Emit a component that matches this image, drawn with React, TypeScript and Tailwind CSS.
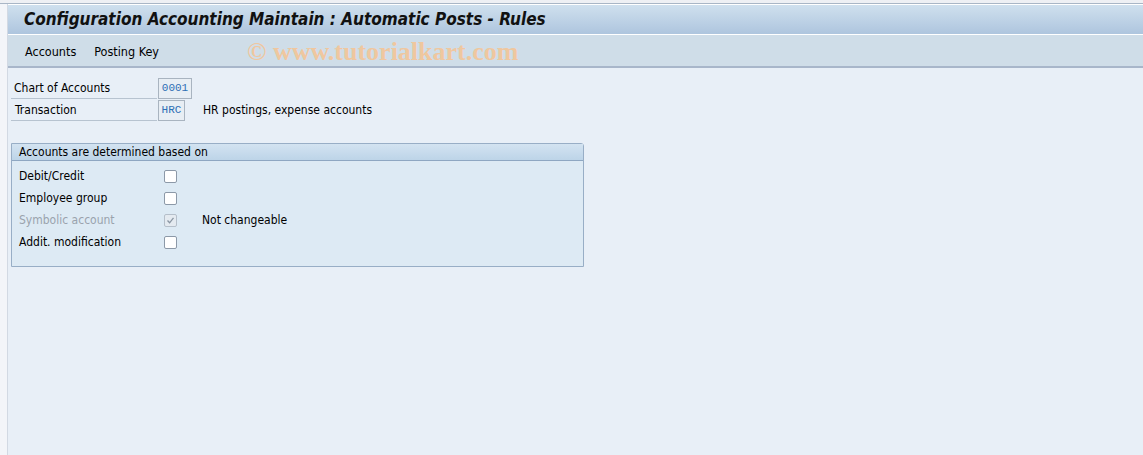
import React from "react";

const font = { fontFamily: '"DejaVu Sans Condensed", "DejaVu Sans", sans-serif' };

function Check({ checked, disabled }: { checked?: boolean; disabled?: boolean }) {
  return (
    <div
      className={`w-[13px] h-[13px] rounded-[2px] border ${disabled ? "border-[#b5bfca] bg-[#e4eaf0]" : "border-[#8c99a8] bg-white"} flex items-center justify-center`}
    >
      {checked && (
        <svg width="9" height="9" viewBox="0 0 9 9">
          <path d="M1.5 4.5 L3.6 6.8 L7.5 1.8" fill="none" stroke="#8a96a3" strokeWidth="1.3" />
        </svg>
      )}
    </div>
  );
}

export default function App() {
  const rows: { label: string; disabled?: boolean; checked?: boolean; note?: string }[] = [
    { label: "Debit/Credit" },
    { label: "Employee group" },
    { label: "Symbolic account", disabled: true, checked: true, note: "Not changeable" },
    { label: "Addit. modification" },
  ];
  return (
    <div className="w-[1143px] h-[455px] overflow-hidden bg-[#f3f5f9] flex flex-col text-[12px] text-black" style={font}>
      <div className="h-[4px] shrink-0 bg-[#eef0f4] border-b border-[#a9b6c6]" />
      <div className="flex-1 flex min-h-0">
        <div className="w-[7px] shrink-0 bg-[#f3f5f9]" />
        <div className="flex-1 flex flex-col border-l border-[#d2d9e3] min-w-0">
          <div className="h-[30px] shrink-0 bg-gradient-to-b from-[#cfe0ee] to-[#aec5de] border-t border-white flex items-center pl-[16px]">
            <span className="text-[17px] font-bold italic text-[#111]">
              Configuration Accounting Maintain : Automatic Posts - Rules
            </span>
          </div>
          <div className="h-[1px] shrink-0 bg-white" />
          <div className="h-[33px] shrink-0 bg-[#cfdde8] border-b-2 border-[#a8b6ca] flex items-center pl-[17px] pt-[3px] relative text-[12.5px]">
            <span className="mr-[18px]">Accounts</span>
            <span>Posting Key</span>
            <span
              className="absolute left-[239px] top-[0px] text-[26px] font-bold text-[#efc79f] leading-[34px]"
              style={{ fontFamily: '"Liberation Serif", serif' }}
            >
              © www.tutorialkart.com
            </span>
          </div>
          <div className="flex-1 bg-[#e8eff7] pl-[3px] pt-[9px]">
            <div className="flex items-center h-[22px]">
              <div className="w-[146px] h-[22px] border-b border-[#b7c3d0] flex items-center pl-[3px]">Chart of Accounts</div>
              <div className="ml-[1px] w-[34px] h-[21px] border border-[#a9b4c0] bg-[#e8eef4] flex items-center justify-center text-[#2e6fb5] text-[11px]" style={{ fontFamily: '"Liberation Mono", monospace' }}>
                0001
              </div>
            </div>
            <div className="flex items-center h-[22px]">
              <div className="w-[146px] h-[22px] border-b border-[#b7c3d0] flex items-center pl-[4px]">Transaction</div>
              <div className="ml-[1px] w-[27px] h-[21px] border border-[#a9b4c0] bg-[#e8eef4] flex items-center justify-center text-[#2e6fb5] text-[11px]" style={{ fontFamily: '"Liberation Mono", monospace' }}>
                HRC
              </div>
              <span className="ml-[18px]">HR postings, expense accounts</span>
            </div>
            <div className="mt-[22px] ml-[0px] w-[573px] h-[124px] border border-[#98aec6] rounded-tr-[3px] bg-[#ddeaf4] flex flex-col">
              <div className="h-[17px] bg-gradient-to-b from-[#d3e3f1] to-[#bdd4e8] border-b border-[#8ea7c2] flex items-center pl-[7px]">
                Accounts are determined based on
              </div>
              <div className="pt-[4px] pl-[7px] flex flex-col">
                {rows.map((r) => (
                  <div key={r.label} className="h-[22px] flex items-center">
                    <span className={`w-[145px] ${r.disabled ? "text-[#9aa3ad]" : ""}`}>{r.label}</span>
                    <Check checked={r.checked} disabled={r.disabled} />
                    {r.note && <span className="ml-[25px]">{r.note}</span>}
                  </div>
                ))}
              </div>
            </div>
          </div>
        </div>
      </div>
    </div>
  );
}
